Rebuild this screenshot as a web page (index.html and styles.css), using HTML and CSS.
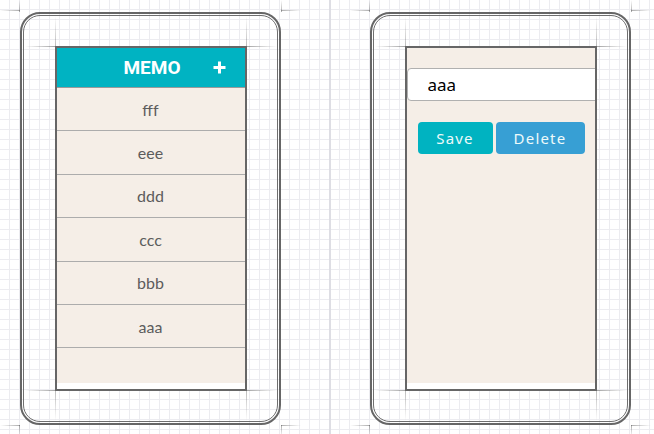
FILE: index.html
```html
<!DOCTYPE html>
<html lang="en">
<head>
    <meta charset="UTF-8">
    <meta name="viewport" content="width=device-width, initial-scale=1.0">
    <title>Memo - wireframe</title>
    <link rel="stylesheet" href="styles.css">
</head>
<body>
    <div class="board">

        <!-- list screen -->
        <div class="phone">
            <div class="bezel">
                <div class="screen">
                    <div class="view">
                        <div class="content">
                            <div class="header">
                                <span></span>
                                <span class="title">MEMO</span>
                                <span class="add">
                                    <svg width="13" height="13" viewBox="0 0 13 13">
                                        <path d="M6.5 0.5v12M0.5 6.5h12" stroke="#fff" stroke-width="3" fill="none"/>
                                    </svg>
                                </span>
                            </div>
                            <div class="memo-row">fff</div>
                            <div class="memo-row">eee</div>
                            <div class="memo-row">ddd</div>
                            <div class="memo-row">ccc</div>
                            <div class="memo-row">bbb</div>
                            <div class="memo-row">aaa</div>
                        </div>
                    </div>
                </div>
            </div>
        </div>

        <!-- edit screen -->
        <div class="phone">
            <div class="bezel">
                <div class="screen">
                    <div class="view">
                        <div class="content edit">
                            <input class="memo-input" type="text" value="aaa">
                            <div class="actions">
                                <button class="btn btn-save">Save</button>
                                <button class="btn btn-delete">Delete</button>
                            </div>
                        </div>
                    </div>
                </div>
            </div>
        </div>

    </div>
</body>
</html>
```

FILE: styles.css
```css
* {
    margin: 0;
    padding: 0;
    box-sizing: border-box;
}

body {
    width: 654px;
    height: 434px;
    overflow: hidden;
    font-family: 'Noto Sans', 'Open Sans', sans-serif;
    background-color: #ffffff;
    background-image:
        linear-gradient(to right, transparent 329px, #dedee4 329px, #dedee4 331px, transparent 331px),
        linear-gradient(to right, #ececf0 1px, transparent 1px),
        linear-gradient(to bottom, #ececf0 1px, transparent 1px);
    background-size: 100% 100%, 10px 10px, 10px 10px;
    background-position: 0 0, 9px 9px, 9px 9px;
}

.board {
    display: flex;
    gap: 89px;
    padding: 12px 0 0 20px;
}

/* phone frame with double outline */
.phone {
    position: relative;
    width: 261px;
    height: 413px;
    border: 2px solid #666666;
    border-radius: 20px;
    padding: 1px;
}

.phone::before {
    content: '';
    position: absolute;
    left: -22px;
    right: -22px;
    top: -4px;
    bottom: -3px;
    pointer-events: none;
    background:
        linear-gradient(to right, transparent, rgba(90, 90, 90, 0.5) 20px, transparent 20px, transparent calc(100% - 20px), rgba(90, 90, 90, 0.5) calc(100% - 20px), transparent) top / 100% 1px no-repeat,
        linear-gradient(to right, transparent, rgba(90, 90, 90, 0.5) 20px, transparent 20px, transparent calc(100% - 20px), rgba(90, 90, 90, 0.5) calc(100% - 20px), transparent) bottom / 100% 1px no-repeat;
}

.phone::after {
    content: '';
    position: absolute;
    left: -3px;
    right: -3px;
    top: -14px;
    bottom: -14px;
    pointer-events: none;
    background:
        linear-gradient(to bottom, transparent, rgba(90, 90, 90, 0.5) 12px, transparent 12px, transparent calc(100% - 12px), rgba(90, 90, 90, 0.5) calc(100% - 12px), transparent) left / 1px 100% no-repeat,
        linear-gradient(to bottom, transparent, rgba(90, 90, 90, 0.5) 12px, transparent 12px, transparent calc(100% - 12px), rgba(90, 90, 90, 0.5) calc(100% - 12px), transparent) right / 1px 100% no-repeat;
}

.bezel {
    height: 100%;
    border: 1px solid #6e6e6e;
    border-radius: 17px;
    display: flex;
    align-items: center;
    justify-content: center;
}

.screen {
    position: relative;
    width: 192px;
    height: 345px;
}

/* guide lines running from the screen corners into the bezel */
.screen::before {
    content: '';
    position: absolute;
    left: -30px;
    right: -30px;
    top: 0;
    bottom: 0;
    pointer-events: none;
    background:
        linear-gradient(to right, transparent, rgba(90, 90, 90, 0.55) 30px, transparent 30px, transparent calc(100% - 30px), rgba(90, 90, 90, 0.55) calc(100% - 30px), transparent) top / 100% 1px no-repeat,
        linear-gradient(to right, transparent, rgba(90, 90, 90, 0.55) 30px, transparent 30px, transparent calc(100% - 30px), rgba(90, 90, 90, 0.55) calc(100% - 30px), transparent) bottom / 100% 1px no-repeat;
}

.screen::after {
    content: '';
    position: absolute;
    left: 0;
    right: 0;
    top: -30px;
    bottom: -30px;
    pointer-events: none;
    background:
        linear-gradient(to bottom, transparent, rgba(90, 90, 90, 0.4) 30px, transparent 30px, transparent calc(100% - 30px), rgba(90, 90, 90, 0.4) calc(100% - 30px), transparent) left / 1px 100% no-repeat,
        linear-gradient(to bottom, transparent, rgba(90, 90, 90, 0.4) 30px, transparent 30px, transparent calc(100% - 30px), rgba(90, 90, 90, 0.4) calc(100% - 30px), transparent) right / 1px 100% no-repeat;
}

.view {
    width: 100%;
    height: 100%;
    border: 2px solid #666666;
    background: #ffffff;
    overflow: hidden;
}

.content {
    height: 335px;
    background: #f5eee7;
}

.header {
    display: grid;
    grid-template-columns: 1fr auto 1fr;
    align-items: center;
    height: 40px;
    background: #00b3c2;
    border-bottom: 1px solid #9a9a9a;
}

.title {
    color: #ffffff;
    font-family: Roboto, sans-serif;
    font-weight: 700;
    font-size: 19px;
    padding-left: 3px;
}

.add {
    justify-self: end;
    padding-right: 19px;
    display: flex;
}

.memo-row {
    height: 43.4px;
    border-bottom: 1px solid #acacac;
    display: flex;
    align-items: center;
    justify-content: center;
    color: #5c5c5c;
    font-family: Lato, sans-serif;
    font-size: 16px;
}

/* edit screen */
.edit {
    padding-top: 20px;
}

.memo-input {
    display: block;
    width: 230px;
    height: 33px;
    border: 1px solid #b0b0b0;
    border-radius: 4px;
    background: #ffffff;
    padding-left: 20px;
    font-family: 'Noto Sans', sans-serif;
    font-size: 17px;
    color: #000000;
    outline: none;
}

.actions {
    display: flex;
    gap: 3px;
    padding: 21px 0 0 11px;
}

.btn {
    height: 32px;
    border: none;
    border-radius: 4px;
    color: #eefafa;
    font-family: 'Noto Sans', sans-serif;
    font-size: 15px;
    letter-spacing: 1.2px;
}

.btn-save {
    width: 75px;
    background: #00b3c1;
}

.btn-delete {
    width: 89px;
    background: #379fd4;
}
```
